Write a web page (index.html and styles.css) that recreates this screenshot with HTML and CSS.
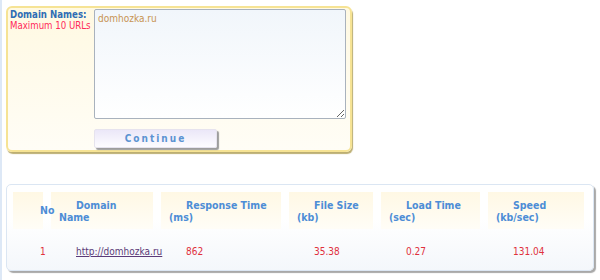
FILE: index.html
```html
<!DOCTYPE html>
<html lang="en">
<head>
    <meta charset="UTF-8">
    <title>Website Speed Test</title>
    <link rel="stylesheet" href="styles.css">
</head>
<body>
    <form class="url-box">
        <div class="labels">
            <p class="label-title">Domain Names:</p>
            <p class="label-note">Maximum 10 URLs</p>
        </div>
        <div class="fields">
            <textarea class="urls">domhozka.ru</textarea>
            <button type="button" class="continue">Continue</button>
        </div>
    </form>

    <section class="results">
        <div class="grid">
            <div class="head no">No</div>
            <div class="head">Domain<br>Name</div>
            <div class="head">Response Time<br>(ms)</div>
            <div class="head">File Size<br>(kb)</div>
            <div class="head">Load Time<br>(sec)</div>
            <div class="head">Speed<br>(kb/sec)</div>

            <div class="cell no">1</div>
            <div class="cell"><a href="#">http://domhozka.ru</a></div>
            <div class="cell">862</div>
            <div class="cell">35.38</div>
            <div class="cell">0.27</div>
            <div class="cell">131.04</div>
        </div>
    </section>
</body>
</html>
```

FILE: styles.css
```css
* {
    margin: 0;
    padding: 0;
    box-sizing: border-box;
}

body {
    font-family: 'DejaVu Sans Condensed', 'DejaVu Sans', sans-serif;
    font-size: 10px;
    background: #fff;
    border-left: 2px solid #dde8f6;
    min-height: 280px;
    padding: 6px 0 0 4px;
}

.url-box {
    width: 346px;
    height: 146px;
    display: flex;
    border: 2px solid #f6e394;
    border-radius: 6px;
    background: linear-gradient(#fff9e2, #fffdf6);
    box-shadow: 1px 2px 1px #bcae72;
    padding: 1px 4px 0 2px;
}

.labels {
    width: 88px;
    font-size: 9.6px;
    line-height: 11px;
    white-space: nowrap;
}

.label-title {
    color: #2f6db4;
    font-weight: bold;
}

.label-note {
    color: #ff2a5a;
}

.fields {
    display: flex;
    flex-direction: column;
}

.urls {
    width: 252px;
    height: 110px;
    border: 1px solid #a9b2bd;
    border-radius: 2px;
    background: linear-gradient(#f1f6fb, #ffffff);
    color: #c79452;
    font-family: inherit;
    font-size: 10px;
    padding: 3px 3px;
    resize: vertical;
}

.continue {
    width: 123px;
    height: 19px;
    margin-top: 10px;
    border: 1px solid #e6e3ee;
    border-radius: 2px;
    background: linear-gradient(#ebe7f8, #fdfcff);
    box-shadow: 2px 2px 1px #9d9d9d;
    color: #5b93d2;
    font-family: inherit;
    font-size: 10px;
    font-weight: bold;
    letter-spacing: 2px;
}

.results {
    width: 588px;
    height: 87px;
    margin-top: 32px;
    border: 1px solid #dbe6f3;
    border-radius: 5px;
    background: linear-gradient(#ffffff 40%, #f4f7fb);
    box-shadow: 2px 2px 1px #a8a8a8;
    padding: 7px 0 0 6px;
}

.grid {
    display: grid;
    grid-template-columns: 30px 102px 120px 84px 99px 96px;
    column-gap: 8px;
    grid-template-rows: 37px 33px;
}

.head {
    background: linear-gradient(#fff8e4, #fffdf7);
    color: #4d8dd6;
    font-weight: bold;
    font-size: 10.5px;
    line-height: 12px;
    padding: 7px 0 0 8px;
    text-indent: 17px;
    white-space: nowrap;
}

.head.no {
    position: relative;
    z-index: 1;
    padding: 12px 0 0 0;
    text-indent: 27px;
}

.cell {
    color: #e0313c;
    padding: 17px 0 0 25px;
    white-space: nowrap;
}

.cell.no {
    padding-left: 27px;
}

.cell a {
    color: #5b3a78;
}
```
